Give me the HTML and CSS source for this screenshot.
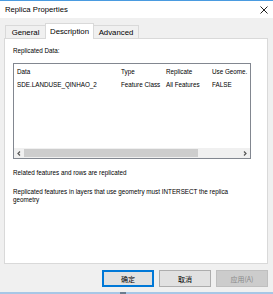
FILE: index.html
```html
<!DOCTYPE html>
<html>
<head>
<meta charset="utf-8">
<link rel="stylesheet" href="styles.css">
</head>
<body>
<div class="window">
  <div class="titlebar">
    <span class="title">Replica Properties</span>
    <svg class="close" width="8" height="8" viewBox="0 0 8 8"><path d="M0.5 0.5 L7.5 7.5 M7.5 0.5 L0.5 7.5" stroke="#222" stroke-width="1" fill="none"/></svg>
  </div>
  <div class="content">
    <div class="tabs">
      <div class="tab tab-general">General</div>
      <div class="tab tab-active">Description</div>
      <div class="tab tab-advanced">Advanced</div>
    </div>
    <div class="panel">
      <div class="label">Replicated Data:</div>
      <div class="list">
        <div class="row head">
          <div class="c c1">Data</div>
          <div class="c c2">Type</div>
          <div class="c c3">Replicate</div>
          <div class="c c4">Use Geome.</div>
        </div>
        <div class="row">
          <div class="c c1">SDE.LANDUSE_QINHAO_2</div>
          <div class="c c2">Feature Class</div>
          <div class="c c3">All Features</div>
          <div class="c c4">FALSE</div>
        </div>
        <div class="spacer"></div>
        <div class="hscroll">
          <div class="arrow"><svg width="4" height="5" viewBox="0 0 4 5"><path d="M3 0.5 L1 2.5 L3 4.5" stroke="#555" stroke-width="1.2" fill="none"/></svg></div>
          <div class="thumb"></div>
          <div class="track"></div>
          <div class="arrow"><svg width="4" height="5" viewBox="0 0 4 5"><path d="M1 0.5 L3 2.5 L1 4.5" stroke="#555" stroke-width="1.2" fill="none"/></svg></div>
        </div>
      </div>
      <p class="note first">Related features and rows are replicated</p>
      <p class="note second">Replicated features in layers that use geometry must INTERSECT the replica geometry</p>
    </div>
    <div class="buttons">
      <div class="btn default">确定</div>
      <div class="btn">取消</div>
      <div class="btn disabled">应用(A)</div>
    </div>
  </div>
  <div class="taskbar"><span class="mark"></span></div>
</div>
</body>
</html>
```

FILE: styles.css
```css
* { box-sizing: border-box; }
html, body { margin: 0; padding: 0; }
body {
  width: 273px;
  height: 294px;
  overflow: hidden;
  font-family: "Liberation Sans", Arial, sans-serif;
  color: #000;
}
.window {
  width: 273px;
  height: 294px;
  background: #f0f0f0;
  border-top: 1px solid #4a9be0;
  display: flex;
  flex-direction: column;
}
.titlebar {
  height: 17px;
  background: #fff;
  display: flex;
  align-items: center;
  justify-content: space-between;
  padding: 0 5px 0 5px;
}
.title {
  font-size: 7.7px;
  color: #000;
  line-height: 1;
  margin-top: 1px;
}
.close { display: block; }
.content {
  flex: 1;
  padding: 5px 5px 0 4px;
  display: flex;
  flex-direction: column;
}
.tabs {
  height: 15px;
  display: flex;
  align-items: flex-end;
  padding-left: 1px;
  position: relative;
  z-index: 2;
  font-size: 7.8px;
}
.tab {
  height: 13px;
  border: 1px solid #d9d9d9;
  border-bottom: none;
  background: #f0f0f0;
  display: flex;
  align-items: center;
  justify-content: center;
  line-height: 1;
  padding-top: 1px;
}
.tab-general { width: 41px; }
.tab-active {
  width: 49px;
  height: 16px;
  margin-bottom: -1px;
  margin-left: -1px;
  background: #fff;
  padding-top: 0;
}
.tab-advanced { width: 46px; margin-left: -1px; }
.panel {
  height: 226px;
  background: #fff;
  border: 1px solid #d9d9d9;
  padding: 8px 8px 0 8px;
  font-size: 6.3px;
  line-height: 8.5px;
  position: relative;
  z-index: 1;
}
.label { height: 9px; }
.list {
  margin-top: 7px;
  width: 238px;
  height: 96px;
  border: 1px solid #828790;
  display: flex;
  flex-direction: column;
}
.row {
  display: flex;
  height: 13px;
  align-items: center;
  white-space: nowrap;
}
.row.head { height: 15px; padding-top: 1px; }
.c { padding-left: 3px; }
.c1 { width: 104px; }
.c2 { width: 45px; }
.c3 { width: 46px; }
.c4 { flex: 1; min-width: 0; }
.spacer { flex: 1; }
.hscroll {
  height: 10px;
  display: flex;
  background: #f0f0f0;
}
.arrow {
  width: 10px;
  display: flex;
  align-items: center;
  justify-content: center;
}
.thumb { width: 174px; background: #cdcdcd; margin: 1px 0; }
.track { flex: 1; }
.note { margin: 0; width: 238px; }
.note.first { margin-top: 10px; }
.note.second { margin-top: 10px; }
.buttons {
  display: flex;
  justify-content: flex-end;
  gap: 5px;
  margin-top: 6px;
}
.btn {
  width: 52px;
  height: 17px;
  border: 1px solid #adadad;
  background: #e1e1e1;
  font-family: "Noto Sans CJK SC", "Liberation Sans", sans-serif;
  font-size: 7px;
  display: flex;
  align-items: center;
  justify-content: center;
  color: #000;
}
.btn.default { border: 1px solid #0078d7; box-shadow: inset 0 0 0 1px #0078d7; }
.btn.disabled { background: #cccccc; border-color: #bfbfbf; color: #8a8a8a; }
.taskbar {
  height: 2px;
  margin-top: 5px;
  background: #a7c7e6;
  display: flex;
  padding-left: 120px;
}
.mark { width: 6px; height: 2px; background: #6a7d90; }
```
